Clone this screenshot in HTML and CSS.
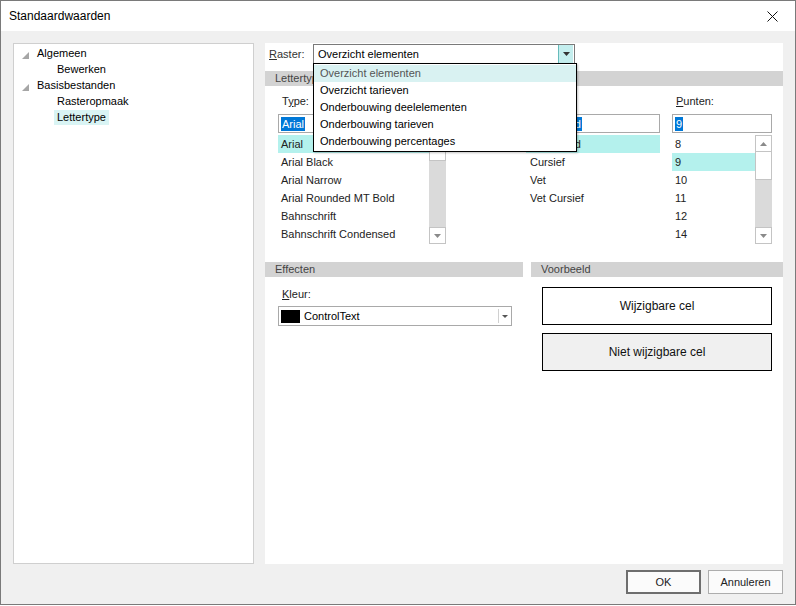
FILE: index.html
```html
<!DOCTYPE html>
<html>
<head>
<meta charset="utf-8">
<link rel="stylesheet" href="styles.css">
</head>
<body>
<div class="window">
  <div class="titlebar">
    <span class="title">Standaardwaarden</span>
    <span class="close"><svg width="11" height="11" viewBox="0 0 11 11"><path d="M0.5 0.5 L10.5 10.5 M10.5 0.5 L0.5 10.5" stroke="#111" stroke-width="1" fill="none"/></svg></span>
  </div>
  <div class="body">
    <div class="content">
      <div class="tree">
        <div class="node l1"><svg class="tri" width="7" height="7" viewBox="0 0 7 7"><polygon points="7,0 7,7 0,7" fill="#a6a6a6"/></svg><span>Algemeen</span></div>
        <div class="node l2"><span>Bewerken</span></div>
        <div class="node l1"><svg class="tri" width="7" height="7" viewBox="0 0 7 7"><polygon points="7,0 7,7 0,7" fill="#a6a6a6"/></svg><span>Basisbestanden</span></div>
        <div class="node l2"><span>Rasteropmaak</span></div>
        <div class="node l2"><span class="tree-sel">Lettertype</span></div>
      </div>
      <div class="panel">
        <div class="raster-row">
          <span class="lbl raster-lbl"><u>R</u>aster:</span>
          <div class="combo raster">
            <span class="combo-text">Overzicht elementen</span>
            <span class="combo-btn hot"><svg width="7" height="4" viewBox="0 0 7 4"><polygon points="0,0 7,0 3.5,4" fill="#333"/></svg></span>
            <div class="dropdown">
              <div class="dd-item dd-sel">Overzicht elementen</div>
              <div class="dd-item">Overzicht tarieven</div>
              <div class="dd-item">Onderbouwing deelelementen</div>
              <div class="dd-item">Onderbouwing tarieven</div>
              <div class="dd-item">Onderbouwing percentages</div>
            </div>
          </div>
        </div>
        <div class="section-head">Lettertype</div>
        <div class="font-area">
          <div class="col col-type">
            <div class="lbl">T<u>y</u>pe:</div>
            <div class="input"><span class="sel">Arial</span></div>
            <div class="list">
              <div class="items">
                <div class="row hl">Arial</div>
                <div class="row">Arial Black</div>
                <div class="row">Arial Narrow</div>
                <div class="row">Arial Rounded MT Bold</div>
                <div class="row">Bahnschrift</div>
                <div class="row">Bahnschrift Condensed</div>
              </div>
              <div class="scrollbar">
                <div class="sb-btn"><svg width="7" height="4" viewBox="0 0 7 4"><polygon points="0,4 7,4 3.5,0" fill="#8a8a8a"/></svg></div>
                <div class="sb-thumb short"></div>
                <div class="sb-track"></div>
                <div class="sb-btn"><svg width="7" height="4" viewBox="0 0 7 4"><polygon points="0,0 7,0 3.5,4" fill="#8a8a8a"/></svg></div>
              </div>
            </div>
          </div>
          <div class="col col-style">
            <div class="lbl"><u>S</u>tijl:</div>
            <div class="input"><span class="sel">Standaard</span></div>
            <div class="list">
              <div class="items">
                <div class="row hl">Standaard</div>
                <div class="row">Cursief</div>
                <div class="row">Vet</div>
                <div class="row">Vet Cursief</div>
              </div>
            </div>
          </div>
          <div class="col col-size">
            <div class="lbl"><u>P</u>unten:</div>
            <div class="input"><span class="sel">9</span></div>
            <div class="list">
              <div class="items">
                <div class="row">8</div>
                <div class="row hl">9</div>
                <div class="row">10</div>
                <div class="row">11</div>
                <div class="row">12</div>
                <div class="row">14</div>
              </div>
              <div class="scrollbar">
                <div class="sb-btn"><svg width="7" height="4" viewBox="0 0 7 4"><polygon points="0,4 7,4 3.5,0" fill="#8a8a8a"/></svg></div>
                <div class="sb-thumb tall"></div>
                <div class="sb-track"></div>
                <div class="sb-btn"><svg width="7" height="4" viewBox="0 0 7 4"><polygon points="0,0 7,0 3.5,4" fill="#8a8a8a"/></svg></div>
              </div>
            </div>
          </div>
        </div>
        <div class="lower">
          <div class="effects">
            <div class="section-head">Effecten</div>
            <div class="lbl kleur-lbl"><u>K</u>leur:</div>
            <div class="combo kleur">
              <span class="swatch"></span>
              <span class="combo-text">ControlText</span>
              <span class="combo-btn plain"><svg width="6" height="3" viewBox="0 0 6 3"><polygon points="0,0 6,0 3,3" fill="#555"/></svg></span>
            </div>
          </div>
          <div class="preview">
            <div class="section-head">Voorbeeld</div>
            <div class="cell editable">Wijzigbare cel</div>
            <div class="cell readonly">Niet wijzigbare cel</div>
          </div>
        </div>
      </div>
    </div>
    <div class="footer">
      <button class="btn default">OK</button>
      <button class="btn">Annuleren</button>
    </div>
  </div>
</div>
</body>
</html>
```

FILE: styles.css
```css
* { box-sizing: border-box; }
html, body { margin: 0; padding: 0; }
body {
  width: 796px;
  height: 606px;
  background: #ffffff;
  font-family: "Liberation Sans", Arial, sans-serif;
  font-size: 11px;
  color: #1e1e1e;
  overflow: hidden;
}
.window {
  width: 796px;
  height: 605px;
  border: 1px solid #7a7a7a;
  display: flex;
  flex-direction: column;
  background: #f0f0f0;
}
.titlebar {
  height: 30px;
  flex: none;
  background: #ffffff;
  display: flex;
  align-items: center;
  justify-content: space-between;
  padding-left: 8px;
  padding-right: 17px;
}
.title { font-size: 12px; color: #000; }
.close { display: flex; align-items: center; }
.body {
  flex: 1;
  display: flex;
  flex-direction: column;
  padding: 12px 12px 10px 12px;
}
.content {
  display: flex;
  gap: 11px;
  height: 521px;
}
.tree {
  width: 241px;
  height: 521px;
  background: #fff;
  border: 1px solid #cfcfcf;
  padding-top: 1px;
}
.node {
  height: 16px;
  display: flex;
  align-items: center;
  color: #000;
}
.node.l1 { padding-left: 8px; }
.node.l1 .tri { margin-right: 8px; margin-top: 5px; }
.node.l2 { padding-left: 40px; }
.node.l2 span { padding: 0 3px; line-height: 15px; }
.tree-sel { background: #d9f4f4; }

.panel {
  width: 518px;
  height: 521px;
  background: #fff;
  display: flex;
  flex-direction: column;
}
.lbl { color: #222; line-height: 14px; }
.raster-row {
  display: flex;
  align-items: center;
  margin-top: 1px;
  padding-left: 4px;
  height: 20px;
}
.raster-lbl { width: 44px; color: #333; }
.combo {
  position: relative;
  display: flex;
  align-items: center;
  height: 20px;
  border: 1px solid #a9a9a9;
  background: #fff;
}
.combo.raster { width: 262px; border-color: #7a7a7a; }
.combo-text { flex: 1; padding-left: 4px; color: #000; }
.combo-btn {
  width: 15px;
  height: 18px;
  display: flex;
  align-items: center;
  justify-content: center;
}
.combo-btn.hot {
  background: #c4eeee;
  border-left: 1px solid #6bb;
  margin-right: 1px;
}
.combo-btn.plain {
  border-left: 1px solid #d0d0d0;
  width: 12px;
}
.dropdown {
  position: absolute;
  top: 18px;
  left: -1px;
  width: 264px;
  height: 89px;
  background: #fff;
  border: 1px solid #000;
  box-shadow: 1px 1px 2px rgba(0,0,0,0.25);
  z-index: 10;
  padding-top: 1px;
}
.dd-item {
  height: 17px;
  line-height: 17px;
  padding-left: 6px;
  color: #000;
}
.dd-sel { background: #d9f2f2; color: #555; }

.section-head {
  height: 15px;
  line-height: 15px;
  background: #d3d3d3;
  color: #444;
  padding-left: 10px;
}
.panel > .section-head { margin-top: 7px; }

.font-area {
  display: flex;
  padding-left: 13px;
}
.col { display: flex; flex-direction: column; }
.col .lbl { margin-top: 8px; padding-left: 4px; }
.col-type { width: 168px; }
.col-style { width: 134px; margin-left: 80px; }
.col-size { width: 100px; margin-left: 12px; }
.input {
  margin-top: 6px;
  height: 19px;
  border: 1px solid #a9a9a9;
  display: flex;
  align-items: center;
  padding-left: 2px;
}
.sel { background: #0078d7; color: #fff; line-height: 14px; padding: 0 1px; }
.list {
  margin-top: 2px;
  height: 109px;
  display: flex;
  overflow: hidden;
}
.items { flex: 1; }
.row {
  height: 18px;
  line-height: 18px;
  padding-left: 3px;
  white-space: nowrap;
  color: #222;
}
.row.hl { background: #b4f1ed; }
.col-style .row { padding-left: 4px; }
.scrollbar {
  width: 17px;
  display: flex;
  flex-direction: column;
  background: #dadada;
}
.sb-btn {
  height: 17px;
  background: #fff;
  border: 1px solid #c4c4c4;
  display: flex;
  align-items: center;
  justify-content: center;
}
.sb-thumb { background: #fff; border: 1px solid #c4c4c4; border-top: none; }
.sb-thumb.short { height: 9px; }
.sb-thumb.tall { height: 28px; }
.sb-track { flex: 1; }

.lower {
  margin-top: 18px;
  display: flex;
  gap: 8px;
}
.effects { width: 258px; }
.preview { width: 252px; }
.kleur-lbl { margin-top: 10px; padding-left: 17px; color: #222; }
.combo.kleur {
  margin-top: 5px;
  margin-left: 13px;
  width: 234px;
}
.combo.kleur .combo-btn { height: 14px; margin-right: 1px; }
.swatch {
  width: 19px;
  height: 13px;
  background: #000;
  margin-left: 2px;
}
.combo.kleur .combo-text { padding-left: 4px; }
.cell {
  margin-left: 11px;
  width: 230px;
  height: 38px;
  border: 1px solid #000;
  display: flex;
  align-items: center;
  justify-content: center;
  font-size: 12px;
  color: #111;
}
.cell.editable { margin-top: 10px; background: #fff; }
.cell.readonly { margin-top: 8px; background: #f0f0f0; }

.footer {
  margin-top: 6px;
  display: flex;
  justify-content: flex-end;
  gap: 7px;
}
.btn {
  width: 75px;
  height: 24px;
  font-family: "Liberation Sans", Arial, sans-serif;
  font-size: 11px;
  color: #222;
  background: #fbfbfb;
  border: 1px solid #adadad;
  padding: 0;
}
.btn.default { border: 2px solid #6e6e6e; }
```
